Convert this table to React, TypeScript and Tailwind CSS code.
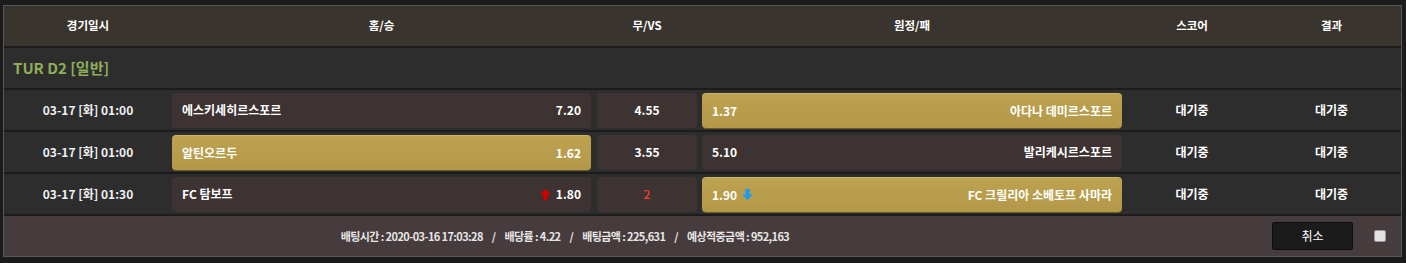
type Match = {
  time: string
  home: string
  homeOdds: string
  draw: string
  away: string
  awayOdds: string
  pick: "home" | "away"
  homeUp?: boolean
  awayDown?: boolean
  drawRed?: boolean
}

const matches: Match[] = [
  { time: "03-17 [화] 01:00", home: "에스키세히르스포르", homeOdds: "7.20", draw: "4.55", away: "아다나 데미르스포르", awayOdds: "1.37", pick: "away" },
  { time: "03-17 [화] 01:00", home: "알틴오르두", homeOdds: "1.62", draw: "3.55", away: "발리케시르스포르", awayOdds: "5.10", pick: "home" },
  { time: "03-17 [화] 01:30", home: "FC 탐보프", homeOdds: "1.80", draw: "2", away: "FC 크릴리아 소베토프 사마라", awayOdds: "1.90", pick: "away", homeUp: true, awayDown: true, drawRed: true },
]

const font = { fontFamily: '"Noto Sans CJK KR", "Noto Sans", sans-serif' }

const cellBase = "h-[35px] flex items-center rounded-[4px] px-[10px]"
const plain = "bg-[#3c3332]"
const gold = "bg-gradient-to-b from-[#bda350] to-[#b29848] border-t border-[#cdb665] shadow-[0_1px_0_#6b5a2a]"

function UpArrow() {
  return (
    <svg width="11" height="11" viewBox="0 0 10 10" className="mr-[5px]">
      <polygon points="5,0 10,5 7,5 7,10 3,10 3,5 0,5" fill="#d40000" />
    </svg>
  )
}

function DownArrow() {
  return (
    <svg width="11" height="11" viewBox="0 0 10 10" className="ml-[5px]">
      <polygon points="3,0 7,0 7,5 10,5 5,10 0,5 3,5" fill="#1e9af0" />
    </svg>
  )
}

export default function App() {
  return (
    <div className="w-[1406px] h-[263px] bg-[#1b1b1b] pt-[5px] pl-[3px]" style={font}>
      <div className="w-[1399px] border border-[#575757] bg-[#2d2d2d] text-white">
        {/* header */}
        <div className="flex h-[40px] items-center bg-[#3a342e] border-b-2 border-[#1c1c1c] box-content text-[11.5px] font-bold">
          <div className="w-[168px] text-center">경기일시</div>
          <div className="w-[419px] text-center">홈/승</div>
          <div className="w-[100px] ml-[6px] text-center">무/VS</div>
          <div className="w-[420px] ml-[5px] text-center">원정/패</div>
          <div className="w-[140px] text-center">스코어</div>
          <div className="flex-1 text-center">결과</div>
        </div>

        {/* league */}
        <div className="h-[40px] flex items-center border-b-2 border-[#1c1c1c] box-content pl-[9px]">
          <span className="text-[15px] font-bold text-[#8fae57]">TUR D2 [일반]</span>
        </div>

        {/* rows */}
        {matches.map((m, i) => (
          <div key={i} className="h-[40px] flex items-center border-b-2 border-[#1c1c1c] box-content text-[12px] font-bold">
            <div className="w-[168px] text-center text-[#f0f0f0]">{m.time}</div>
            <div className={`w-[419px] justify-between ${cellBase} ${m.pick === "home" ? gold : plain}`}>
              <span>{m.home}</span>
              <span className="flex items-center">
                {m.homeUp && <UpArrow />}
                {m.homeOdds}
              </span>
            </div>
            <div className={`w-[100px] ml-[6px] justify-center ${cellBase} ${plain}`}>
              <span className={m.drawRed ? "text-[#f5392e] font-medium" : ""}>{m.draw}</span>
            </div>
            <div className={`w-[420px] ml-[5px] justify-between ${cellBase} ${m.pick === "away" ? gold : plain}`}>
              <span className="flex items-center">
                {m.awayOdds}
                {m.awayDown && <DownArrow />}
              </span>
              <span>{m.away}</span>
            </div>
            <div className="w-[140px] text-center">대기중</div>
            <div className="flex-1 text-center">대기중</div>
          </div>
        ))}

        {/* footer */}
        <div className="h-[40px] flex items-center bg-[#463c3d]">
          <div className="w-[1122px] text-center text-[11px] font-bold tracking-[-0.6px] text-[#e6e6e6]">
            배팅시간 : 2020-03-16 17:03:28<span className="mx-[9px]">/</span>배당률 : 4.22<span className="mx-[9px]">/</span>배팅금액 : 225,631<span className="mx-[9px]">/</span>예상적중금액 : 952,163
          </div>
          <button className="ml-[146px] w-[81px] h-[28px] bg-[#1c1b1b] border border-[#0c0c0c] rounded-[2px] text-[12px] text-white">
            취소
          </button>
          <span className="ml-[21px] w-[12px] h-[12px] rounded-[2px] bg-[#e2e2e2] border border-[#9a9a9a]" />
        </div>
      </div>
    </div>
  )
}
